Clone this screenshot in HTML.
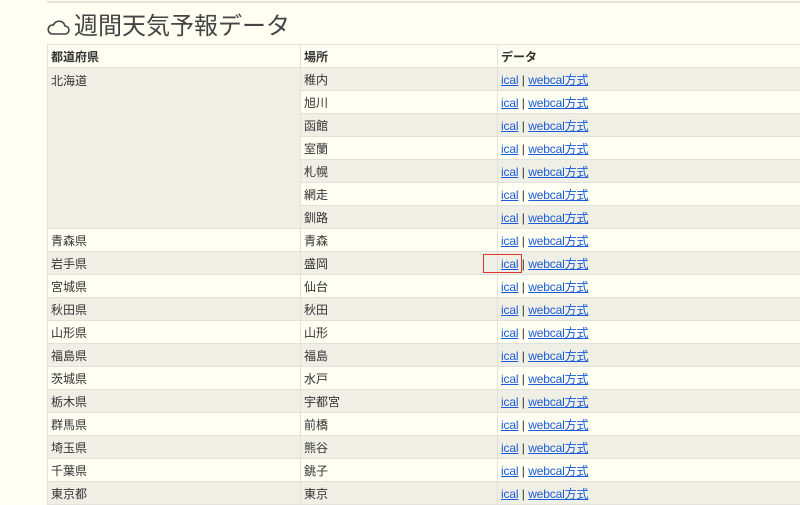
<!DOCTYPE html>
<html><head><meta charset="utf-8"><style>
body{margin:0;background:#fefef2;font-family:"Liberation Sans","Noto Sans CJK JP",sans-serif;color:#333;width:800px;height:503px;overflow:hidden;position:relative}
.top{position:absolute;left:47px;top:1px;width:760px;border-top:2px solid #e4e4dc}
h1{position:absolute;left:47px;top:11px;margin:0;font-weight:normal;font-size:24px;color:#444;line-height:32px;display:flex;align-items:center}
h1 svg{margin-right:4px}
table{position:absolute;left:47px;top:44px;border-collapse:collapse;width:800px;font-size:12px}
td,th{border:1px solid #e2e2da;height:22px;padding:0 3px;text-align:left;vertical-align:middle}
th{font-weight:bold}
tr.d td{background:#f0efe5}
td.p{vertical-align:top;padding-top:4px;background:#f0efe5}
a{color:#1a5bd8;text-decoration:underline;letter-spacing:-0.15px}
.box{position:absolute;left:483px;top:254px;width:39px;height:19px;border:1.5px solid #d33;box-sizing:border-box}
</style></head><body>
<div class="top"></div>
<h1><svg width="23" height="16" viewBox="0 0 23 16"><path d="M5 15h13a4 4 0 0 0 0-8 6 6 0 0 0-11.5-1A4.5 4.5 0 0 0 5 15z" fill="none" stroke="#444" stroke-width="1.6"/></svg>週間天気予報データ</h1>
<table>
<tr><th style="width:246px">都道府県</th><th style="width:190px">場所</th><th>データ</th></tr>
<tr class="d"><td class="p" rowspan="7">北海道</td><td>稚内</td><td><a>ical</a> | <a>webcal方式</a></td></tr>
<tr><td>旭川</td><td><a>ical</a> | <a>webcal方式</a></td></tr>
<tr class="d"><td>函館</td><td><a>ical</a> | <a>webcal方式</a></td></tr>
<tr><td>室蘭</td><td><a>ical</a> | <a>webcal方式</a></td></tr>
<tr class="d"><td>札幌</td><td><a>ical</a> | <a>webcal方式</a></td></tr>
<tr><td>網走</td><td><a>ical</a> | <a>webcal方式</a></td></tr>
<tr class="d"><td>釧路</td><td><a>ical</a> | <a>webcal方式</a></td></tr>
<tr><td>青森県</td><td>青森</td><td><a>ical</a> | <a>webcal方式</a></td></tr>
<tr class="d"><td>岩手県</td><td>盛岡</td><td><a>ical</a> | <a>webcal方式</a></td></tr>
<tr><td>宮城県</td><td>仙台</td><td><a>ical</a> | <a>webcal方式</a></td></tr>
<tr class="d"><td>秋田県</td><td>秋田</td><td><a>ical</a> | <a>webcal方式</a></td></tr>
<tr><td>山形県</td><td>山形</td><td><a>ical</a> | <a>webcal方式</a></td></tr>
<tr class="d"><td>福島県</td><td>福島</td><td><a>ical</a> | <a>webcal方式</a></td></tr>
<tr><td>茨城県</td><td>水戸</td><td><a>ical</a> | <a>webcal方式</a></td></tr>
<tr class="d"><td>栃木県</td><td>宇都宮</td><td><a>ical</a> | <a>webcal方式</a></td></tr>
<tr><td>群馬県</td><td>前橋</td><td><a>ical</a> | <a>webcal方式</a></td></tr>
<tr class="d"><td>埼玉県</td><td>熊谷</td><td><a>ical</a> | <a>webcal方式</a></td></tr>
<tr><td>千葉県</td><td>銚子</td><td><a>ical</a> | <a>webcal方式</a></td></tr>
<tr class="d"><td>東京都</td><td>東京</td><td><a>ical</a> | <a>webcal方式</a></td></tr>
</table>
<div class="box"></div>
</body></html>
